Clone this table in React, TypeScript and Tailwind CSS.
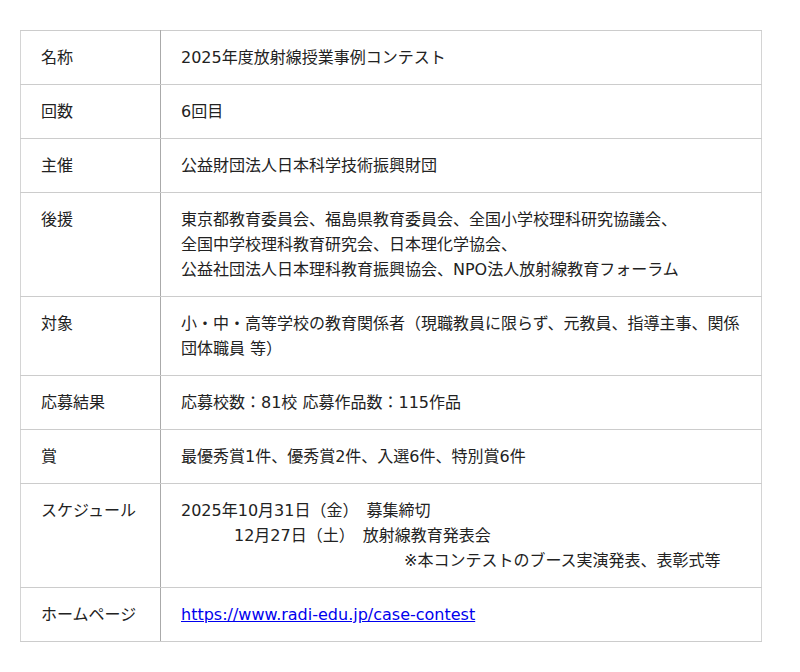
import React from "react";

const rows: { label: string; content: React.ReactNode }[] = [
  { label: "名称", content: "2025年度放射線授業事例コンテスト" },
  { label: "回数", content: "6回目" },
  { label: "主催", content: "公益財団法人日本科学技術振興財団" },
  {
    label: "後援",
    content: (
      <>
        東京都教育委員会、福島県教育委員会、全国小学校理科研究協議会、
        <br />
        全国中学校理科教育研究会、日本理化学協会、
        <br />
        公益社団法人日本理科教育振興協会、NPO法人放射線教育フォーラム
      </>
    ),
  },
  {
    label: "対象",
    content:
      "小・中・高等学校の教育関係者（現職教員に限らず、元教員、指導主事、関係団体職員 等）",
  },
  { label: "応募結果", content: "応募校数：81校 応募作品数：115作品" },
  { label: "賞", content: "最優秀賞1件、優秀賞2件、入選6件、特別賞6件" },
  {
    label: "スケジュール",
    content: (
      <>
        <div>2025年10月31日（金）　募集締切</div>
        <div className="pl-[53px]">12月27日（土）　放射線教育発表会</div>
        <div className="pl-[223px]">※本コンテストのブース実演発表、表彰式等</div>
      </>
    ),
  },
  {
    label: "ホームページ",
    content: (
      <a href="#" className="text-[#0000ee] underline">
        https://www.radi-edu.jp/case-contest
      </a>
    ),
  },
];

export default function App() {
  return (
    <div
      className="bg-white min-h-[672px] pt-[30px] pl-[20px] text-[16px] leading-[25px] text-[#222]"
      style={{ fontFamily: '"DejaVu Sans", "Noto Sans CJK JP", sans-serif' }}
    >
      <table className="w-[742px] border-collapse border border-[#d4d4d4]">
        <tbody>
          {rows.map((r) => (
            <tr key={r.label}>
              <td className="w-[140px] align-top border-t border-b border-[#cccccc] border-r-[#aaaaaa] border-r px-[20px] py-[14px]">
                {r.label}
              </td>
              <td className="align-top border-t border-b border-[#cccccc] px-[20px] py-[14px]">
                {r.content}
              </td>
            </tr>
          ))}
        </tbody>
      </table>
    </div>
  );
}
